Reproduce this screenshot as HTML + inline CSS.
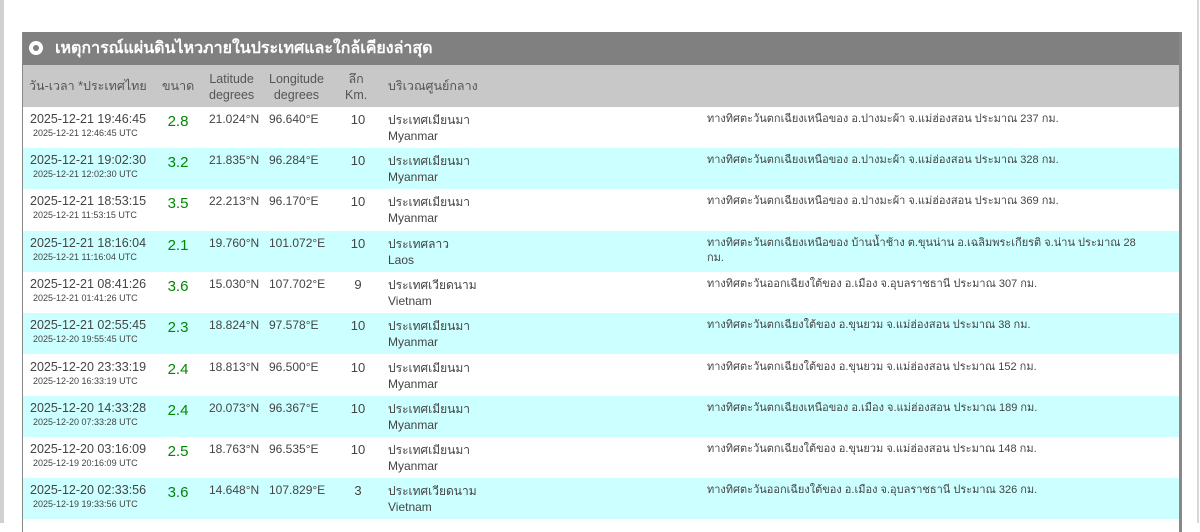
<!DOCTYPE html>
<html><head><meta charset="utf-8"><style>
body{margin:0;width:1200px;height:523px;overflow:hidden;background:#fff;font-family:"Liberation Sans","Noto Sans CJK SC",sans-serif;color:#444;position:relative}
.ls{position:absolute;left:0;top:0;width:4px;height:523px;background:#d0d0d0}
.rs{position:absolute;left:1197px;top:0;width:2px;height:523px;background:#d8d8d8}
.tb{position:absolute;left:22px;top:32px;width:1156px;height:500px;border-left:1px solid #888;border-right:3px solid #888}
.ttl{position:absolute;left:0;top:0;width:1156px;height:33px;background:#808080;color:#fff;font-weight:bold;font-size:16px;line-height:33px}
.ttl .c{position:absolute;left:6px;top:9px;width:14px;height:14px;border-radius:50%;background:#fff}
.ttl .c:after{content:"";position:absolute;left:4px;top:4px;width:6px;height:6px;border-radius:50%;background:#808080}
.ttl span{position:absolute;left:32px}
.hd{position:absolute;left:0;top:33px;width:1156px;height:42px;background:#c8c8c8;font-size:12.5px;color:#555}
.hd div{position:absolute;text-align:center;line-height:16px}
.row{position:absolute;left:0;width:1156px;height:41px;font-size:13px}
.b{background:#ccffff}
.row div{position:absolute}
.d{left:7px;top:5px;line-height:15px;font-size:12.5px}
.d small{display:block;font-size:9px;line-height:12px;padding-left:3px}
.m{left:140px;width:30px;text-align:center;top:6px;color:#080;font-size:15px}
.la{left:186px;top:5px;font-size:12px}
.lo{left:246px;top:5px;font-size:12px}
.dp{left:320px;width:30px;text-align:center;top:5px}
.rg{left:365px;top:5px;font-size:12px;line-height:16px}
.ds{left:684px;top:5px;width:440px;font-size:11px;line-height:15px}
</style></head><body>
<div class="ls"></div><div class="rs"></div>
<div class="tb">
<div class="ttl"><div class="c"></div><span>เหตุการณ์แผ่นดินไหวภายในประเทศและใกล้เคียงล่าสุด</span></div>
<div class="hd">
<div style="left:6px;top:13px">วัน-เวลา *ประเทศไทย</div>
<div style="left:139px;top:13px">ขนาด</div>
<div style="left:186px;top:6px">Latitude<br>degrees</div>
<div style="left:246px;top:6px">Longitude<br>degrees</div>
<div style="left:322px;top:6px">ลึก<br>Km.</div>
<div style="left:365px;top:13px">บริเวณศูนย์กลาง</div>
</div>
<div class="row" style="top:75px"><div class="d">2025-12-21 19:46:45<small>2025-12-21 12:46:45 UTC</small></div><div class="m">2.8</div><div class="la">21.024°N</div><div class="lo">96.640°E</div><div class="dp">10</div><div class="rg">ประเทศเมียนมา<br>Myanmar</div><div class="ds">ทางทิศตะวันตกเฉียงเหนือของ อ.ปางมะผ้า จ.แม่ฮ่องสอน ประมาณ 237 กม.</div></div>
<div class="row b" style="top:116px"><div class="d">2025-12-21 19:02:30<small>2025-12-21 12:02:30 UTC</small></div><div class="m">3.2</div><div class="la">21.835°N</div><div class="lo">96.284°E</div><div class="dp">10</div><div class="rg">ประเทศเมียนมา<br>Myanmar</div><div class="ds">ทางทิศตะวันตกเฉียงเหนือของ อ.ปางมะผ้า จ.แม่ฮ่องสอน ประมาณ 328 กม.</div></div>
<div class="row" style="top:157px"><div class="d">2025-12-21 18:53:15<small>2025-12-21 11:53:15 UTC</small></div><div class="m">3.5</div><div class="la">22.213°N</div><div class="lo">96.170°E</div><div class="dp">10</div><div class="rg">ประเทศเมียนมา<br>Myanmar</div><div class="ds">ทางทิศตะวันตกเฉียงเหนือของ อ.ปางมะผ้า จ.แม่ฮ่องสอน ประมาณ 369 กม.</div></div>
<div class="row b" style="top:199px"><div class="d">2025-12-21 18:16:04<small>2025-12-21 11:16:04 UTC</small></div><div class="m">2.1</div><div class="la">19.760°N</div><div class="lo">101.072°E</div><div class="dp">10</div><div class="rg">ประเทศลาว<br>Laos</div><div class="ds">ทางทิศตะวันตกเฉียงเหนือของ บ้านน้ำช้าง ต.ขุนน่าน อ.เฉลิมพระเกียรติ จ.น่าน ประมาณ 28 กม.</div></div>
<div class="row" style="top:240px"><div class="d">2025-12-21 08:41:26<small>2025-12-21 01:41:26 UTC</small></div><div class="m">3.6</div><div class="la">15.030°N</div><div class="lo">107.702°E</div><div class="dp">9</div><div class="rg">ประเทศเวียดนาม<br>Vietnam</div><div class="ds">ทางทิศตะวันออกเฉียงใต้ของ อ.เมือง จ.อุบลราชธานี ประมาณ 307 กม.</div></div>
<div class="row b" style="top:281px"><div class="d">2025-12-21 02:55:45<small>2025-12-20 19:55:45 UTC</small></div><div class="m">2.3</div><div class="la">18.824°N</div><div class="lo">97.578°E</div><div class="dp">10</div><div class="rg">ประเทศเมียนมา<br>Myanmar</div><div class="ds">ทางทิศตะวันตกเฉียงใต้ของ อ.ขุนยวม จ.แม่ฮ่องสอน ประมาณ 38 กม.</div></div>
<div class="row" style="top:323px"><div class="d">2025-12-20 23:33:19<small>2025-12-20 16:33:19 UTC</small></div><div class="m">2.4</div><div class="la">18.813°N</div><div class="lo">96.500°E</div><div class="dp">10</div><div class="rg">ประเทศเมียนมา<br>Myanmar</div><div class="ds">ทางทิศตะวันตกเฉียงใต้ของ อ.ขุนยวม จ.แม่ฮ่องสอน ประมาณ 152 กม.</div></div>
<div class="row b" style="top:364px"><div class="d">2025-12-20 14:33:28<small>2025-12-20 07:33:28 UTC</small></div><div class="m">2.4</div><div class="la">20.073°N</div><div class="lo">96.367°E</div><div class="dp">10</div><div class="rg">ประเทศเมียนมา<br>Myanmar</div><div class="ds">ทางทิศตะวันตกเฉียงเหนือของ อ.เมือง จ.แม่ฮ่องสอน ประมาณ 189 กม.</div></div>
<div class="row" style="top:405px"><div class="d">2025-12-20 03:16:09<small>2025-12-19 20:16:09 UTC</small></div><div class="m">2.5</div><div class="la">18.763°N</div><div class="lo">96.535°E</div><div class="dp">10</div><div class="rg">ประเทศเมียนมา<br>Myanmar</div><div class="ds">ทางทิศตะวันตกเฉียงใต้ของ อ.ขุนยวม จ.แม่ฮ่องสอน ประมาณ 148 กม.</div></div>
<div class="row b" style="top:446px"><div class="d">2025-12-20 02:33:56<small>2025-12-19 19:33:56 UTC</small></div><div class="m">3.6</div><div class="la">14.648°N</div><div class="lo">107.829°E</div><div class="dp">3</div><div class="rg">ประเทศเวียดนาม<br>Vietnam</div><div class="ds">ทางทิศตะวันออกเฉียงใต้ของ อ.เมือง จ.อุบลราชธานี ประมาณ 326 กม.</div></div>
</div>
</body></html>
